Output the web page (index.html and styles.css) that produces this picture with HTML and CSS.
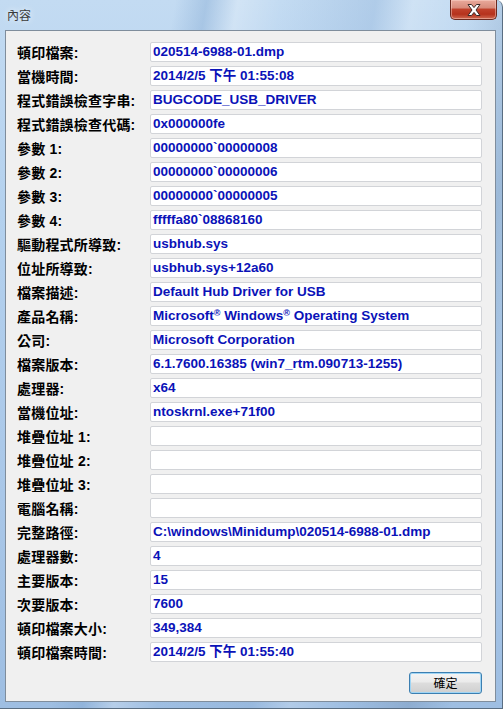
FILE: index.html
```html
<!DOCTYPE html>
<html>
<head>
<meta charset="utf-8">
<link rel="stylesheet" href="styles.css">
</head>
<body>
<div class="window">
  <div class="titlebar">
    <span class="title">內容</span>
    <div class="close">
      <svg width="20" height="14" viewBox="0 0 20 14">
        <path d="M4 1.5 L7.5 1.5 L10 4.6 L12.5 1.5 L16 1.5 L12 7 L16 12.5 L12.5 12.5 L10 9.4 L7.5 12.5 L4 12.5 L8 7 Z" fill="#ffffff" stroke="#3a2a28" stroke-width="1" stroke-linejoin="round"/>
      </svg>
    </div>
  </div>
  <div class="client">
    <div class="fields">
      <div class="label">頓印檔案:</div><div class="value">020514-6988-01.dmp</div>
      <div class="label">當機時間:</div><div class="value">2014/2/5 下午 01:55:08</div>
      <div class="label">程式錯誤檢查字串:</div><div class="value">BUGCODE_USB_DRIVER</div>
      <div class="label">程式錯誤檢查代碼:</div><div class="value">0x000000fe</div>
      <div class="label">參數 1:</div><div class="value">00000000`00000008</div>
      <div class="label">參數 2:</div><div class="value">00000000`00000006</div>
      <div class="label">參數 3:</div><div class="value">00000000`00000005</div>
      <div class="label">參數 4:</div><div class="value">fffffa80`08868160</div>
      <div class="label">驅動程式所導致:</div><div class="value">usbhub.sys</div>
      <div class="label">位址所導致:</div><div class="value">usbhub.sys+12a60</div>
      <div class="label">檔案描述:</div><div class="value">Default Hub Driver for USB</div>
      <div class="label">產品名稱:</div><div class="value">Microsoft<sup>®</sup> Windows<sup>®</sup> Operating System</div>
      <div class="label">公司:</div><div class="value">Microsoft Corporation</div>
      <div class="label">檔案版本:</div><div class="value">6.1.7600.16385 (win7_rtm.090713-1255)</div>
      <div class="label">處理器:</div><div class="value">x64</div>
      <div class="label">當機位址:</div><div class="value">ntoskrnl.exe+71f00</div>
      <div class="label">堆疊位址 1:</div><div class="value"></div>
      <div class="label">堆疊位址 2:</div><div class="value"></div>
      <div class="label">堆疊位址 3:</div><div class="value"></div>
      <div class="label">電腦名稱:</div><div class="value"></div>
      <div class="label">完整路徑:</div><div class="value">C:\windows\Minidump\020514-6988-01.dmp</div>
      <div class="label">處理器數:</div><div class="value">4</div>
      <div class="label">主要版本:</div><div class="value">15</div>
      <div class="label">次要版本:</div><div class="value">7600</div>
      <div class="label">頓印檔案大小:</div><div class="value">349,384</div>
      <div class="label">頓印檔案時間:</div><div class="value">2014/2/5 下午 01:55:40</div>
    </div>
    <div class="actions">
      <button class="ok">確定</button>
    </div>
  </div>
</div>
</body>
</html>
```

FILE: styles.css
```css
html, body {
  margin: 0;
  padding: 0;
}
body {
  width: 503px;
  height: 709px;
  overflow: hidden;
  background: #ffffff;
}
.window {
  width: 503px;
  height: 709px;
  box-sizing: border-box;
  border-right: 1px solid #5a6e82;
  border-bottom: 1px solid #5a6e82;
  border-radius: 0 7px 0 0;
  background:
    linear-gradient(100deg, rgba(255,255,255,0) 0%, rgba(255,255,255,0) 28%, rgba(120,160,205,0.35) 33%, rgba(255,255,255,0.25) 38%, rgba(255,255,255,0) 45%, rgba(140,175,215,0.35) 60%, rgba(255,255,255,0.2) 66%, rgba(255,255,255,0) 75%, rgba(110,140,175,0.35) 85%, rgba(255,255,255,0) 92%),
    linear-gradient(180deg, #c3dbf2 0%, #b4d1ee 30%, #a9c7e8 70%, #9ebee2 100%);
  display: flex;
  flex-direction: column;
  font-family: "Liberation Sans", "Noto Sans CJK TC", sans-serif;
}
.titlebar {
  height: 30px;
  display: flex;
  align-items: flex-start;
  justify-content: space-between;
  flex: none;
}
.title {
  margin: 6px 0 0 7px;
  font-family: "Noto Sans CJK TC", sans-serif;
  font-size: 12px;
  color: #3a3a3a;
  text-shadow: 0 0 6px rgba(255,255,255,0.9);
}
.close {
  width: 47px;
  height: 20px;
  margin-right: 5px;
  box-sizing: border-box;
  border: 1px solid #6b2a20;
  border-top: none;
  border-radius: 0 0 5px 5px;
  background: linear-gradient(180deg, #e9aa9c 0%, #d88c7c 40%, #c0402a 50%, #b5321d 75%, #d06a52 100%);
  box-shadow: inset 0 0 0 1px rgba(255,220,210,0.45);
  display: flex;
  align-items: center;
  justify-content: center;
}
.close svg {
  display: block;
}
.client {
  margin-left: 5px;
  width: 491px;
  height: 672px;
  box-sizing: border-box;
  border: 1px solid #7f8d9c;
  background: #f0f0f0;
  padding: 11px 13px 0 11px;
  flex: none;
}
.fields {
  display: grid;
  grid-template-columns: 133px 332px;
  grid-auto-rows: 20px;
  row-gap: 4px;
}
.label {
  display: flex;
  align-items: center;
  font-size: 14px;
  font-weight: bold;
  color: #000000;
  white-space: nowrap;
  letter-spacing: 0.2px;
}
.value {
  box-sizing: border-box;
  height: 20px;
  border: 1px solid #d2d4d8;
  border-radius: 2px;
  background: #ffffff;
  padding: 0 0 0 2px;
  font-size: 13.5px;
  line-height: 18px;
  font-weight: bold;
  color: #0a12b8;
  white-space: nowrap;
  overflow: hidden;
}
.value sup {
  font-size: 9px;
  line-height: 0;
  vertical-align: 4px;
}
.actions {
  display: flex;
  justify-content: flex-end;
  margin-top: 10px;
}
.ok {
  width: 73px;
  height: 22px;
  box-sizing: border-box;
  border: 1px solid #3c7fb1;
  border-radius: 3px;
  background: linear-gradient(180deg, #f4f4f4 0%, #ebebeb 45%, #dddddd 50%, #cfcfcf 100%);
  box-shadow: inset 0 0 0 1px #9fd5f5;
  font-family: "Noto Sans CJK TC", sans-serif;
  font-size: 12px;
  color: #000000;
  padding: 0;
  line-height: 18px;
}
```
